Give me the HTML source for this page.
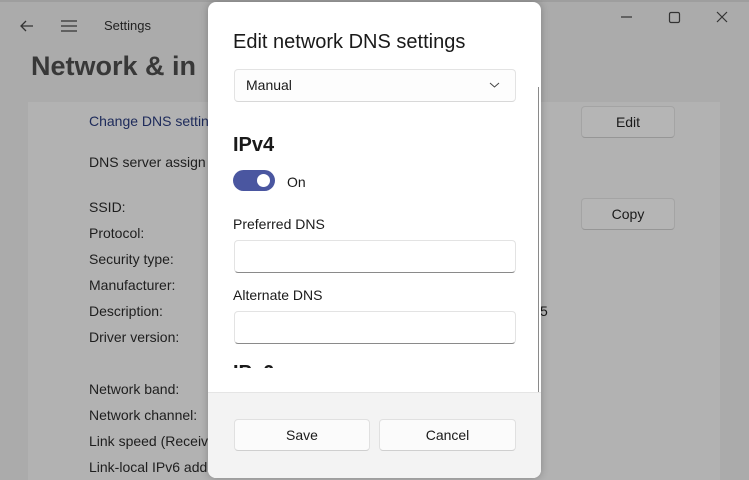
<!DOCTYPE html><html><head><style>
body{margin:0;width:749px;height:480px;overflow:hidden;background:#ababab;font-family:"Liberation Sans",sans-serif;position:relative;color:#1a1a1a}
.a{position:absolute;white-space:nowrap}
.l{position:absolute;left:89px;font-size:14px;color:#1e1e1e}
.bt{position:absolute;background:#b5b5b5;border:1px solid #a4a4a4;border-bottom-color:#969696;border-radius:4px;font-size:14px;text-align:center}
.dlg{position:absolute;left:208px;top:2px;width:333px;height:476px;background:#fff;border-radius:8px;overflow:hidden;box-shadow:0 0 8px rgba(0,0,0,.25)}
.in{position:absolute;left:26px;width:280px;height:31px;background:#fff;border:1px solid #e3e3e3;border-bottom:1px solid #8a8a8a;border-radius:4px}
.fb{position:absolute;top:417px;height:30px;background:#fbfbfb;border:1px solid #e0e0e0;border-bottom-color:#cfcfcf;border-radius:4px;font-size:14px;text-align:center;line-height:30px}
</style></head><body>
<div class="a" style="left:0;top:0;width:749px;height:2px;background:#9e9e9e"></div>
<svg class="a" style="left:18px;top:18px" width="18" height="16"><path d="M15 8H3M8 3L3 8l5 5" stroke="#333" stroke-width="1.3" fill="none"/></svg>
<svg class="a" style="left:60px;top:19px" width="18" height="14"><path d="M1 2h16M1 7h16M1 12h16" stroke="#333" stroke-width="1.3"/></svg>
<div class="a" style="left:104px;top:18px;font-size:13px;color:#222">Settings</div>
<svg class="a" style="left:615px;top:10px" width="125" height="16"><path d="M6 7h11" stroke="#333" stroke-width="1.2"/><rect x="54.5" y="2.5" width="10" height="10" rx="1.5" stroke="#333" fill="none" stroke-width="1.2"/><path d="M102 2l10 10M112 2l-10 10" stroke="#333" stroke-width="1.2"/></svg>
<div class="a" style="left:31px;top:51px;font-size:27px;font-weight:bold;color:#383838">Network &amp; in</div>
<div class="a" style="left:28px;top:102px;width:692px;height:378px;background:#b2b2b2"></div>
<div class="l" style="top:113px;color:#1d2a5a">Change DNS settin</div>
<div class="l" style="top:154px">DNS server assign</div>
<div class="l" style="top:199px">SSID:</div>
<div class="l" style="top:225px">Protocol:</div>
<div class="l" style="top:251px">Security type:</div>
<div class="l" style="top:277px">Manufacturer:</div>
<div class="l" style="top:303px">Description:</div>
<div class="l" style="top:329px">Driver version:</div>
<div class="l" style="top:381px">Network band:</div>
<div class="l" style="top:407px">Network channel:</div>
<div class="l" style="top:433px">Link speed (Receiv</div>
<div class="l" style="top:459px">Link-local IPv6 add</div>
<div class="a" style="left:540px;top:303px;font-size:14px">5</div>
<div class="bt" style="left:581px;top:106px;width:92px;height:30px;line-height:30px">Edit</div>
<div class="bt" style="left:581px;top:198px;width:92px;height:30px;line-height:30px">Copy</div>
<div class="dlg">
<div class="a" style="left:25px;top:29px;font-size:20px;color:#1a1a1a">Edit network DNS settings</div>
<div class="in" style="top:67px;height:31px;border-bottom-color:#d8d8d8;background:#fdfdfd"><span class="a" style="left:11px;top:7px;font-size:14px">Manual</span><svg class="a" style="left:254px;top:11px" width="12" height="8"><path d="M1 2l4.5 4 4.5-4" stroke="#444" fill="none"/></svg></div>
<div class="a" style="left:330px;top:85px;width:1px;height:305px;background:#8a8a8a"></div>
<div class="a" style="left:25px;top:132px;font-size:20px;font-weight:bold;color:#1a1a1a">IPv4</div>
<div class="a" style="left:25px;top:168px;width:42px;height:21px;border-radius:11px;background:#4a56a0"></div>
<div class="a" style="left:49px;top:172px;width:13px;height:13px;border-radius:7px;background:#fff"></div>
<div class="a" style="left:79px;top:172px;font-size:14px">On</div>
<div class="a" style="left:25px;top:214px;font-size:14px">Preferred DNS</div>
<div class="in" style="top:238px"></div>
<div class="a" style="left:25px;top:285px;font-size:14px">Alternate DNS</div>
<div class="in" style="top:309px"></div>
<div class="a" style="left:25px;top:362px;width:60px;height:4px;overflow:hidden"><span style="position:absolute;top:-2px;font-size:20px;font-weight:bold">IPv6</span></div>
<div class="a" style="left:0;top:390px;width:333px;height:86px;background:#f3f3f3;border-top:1px solid #e5e5e5"></div>
<div class="fb" style="left:26px;width:134px">Save</div>
<div class="fb" style="left:171px;width:135px">Cancel</div>
</div>
</body></html>
